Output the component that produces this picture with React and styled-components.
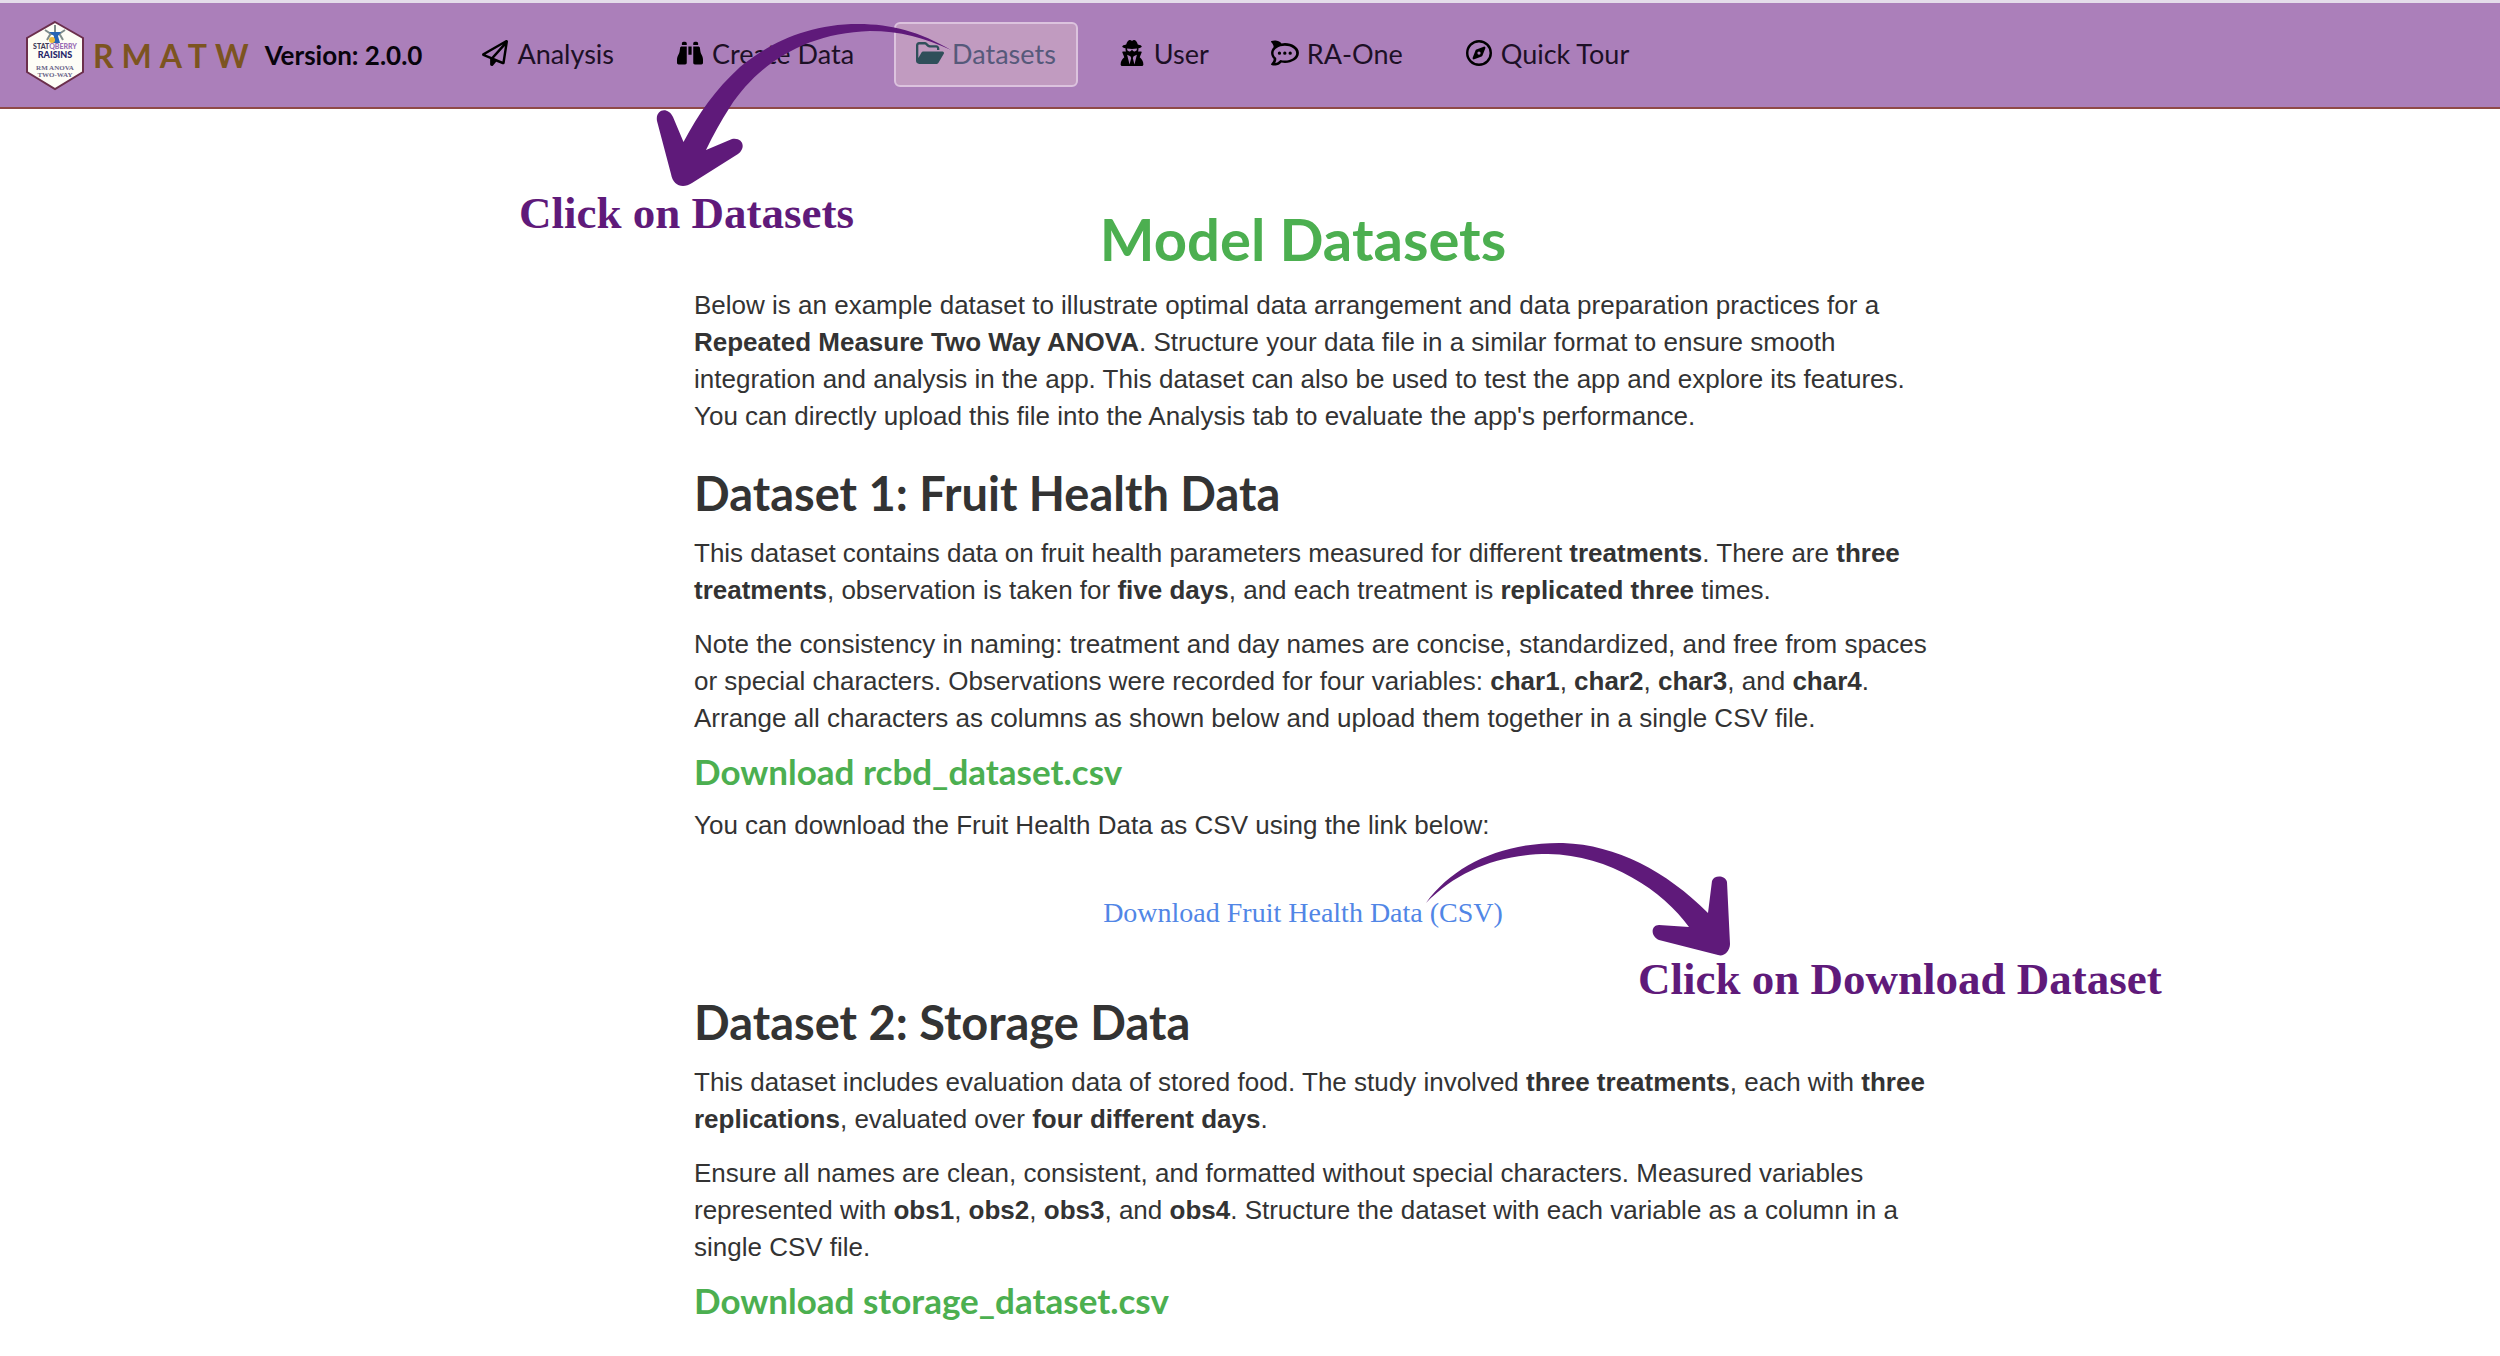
import styled, { createGlobalStyle } from "styled-components";
import {
  FaBinoculars,
  FaRegCompass,
  FaRegPaperPlane,
  FaRocketchat,
  FaUserSecret,
} from "react-icons/fa6";

const GlobalStyle = createGlobalStyle`
  * {
    box-sizing: border-box;
  }

  body {
    margin: 0;
    background-color: #ffffff;
    color: #333333;
    font-family: "Liberation Sans", Arial, sans-serif;
    font-size: 26px;
    line-height: 37px;
  }
`;

const StyledPage = styled.div`
  position: relative;
`;

// Top bar of the app
const StyledNavbar = styled.header`
  display: flex;
  align-items: center;
  height: 109px;
  padding: 0 25px;
  background-color: #ab7fba;
  border-top: 3px solid #e4dcea;
  border-bottom: 2px solid #8f4a48;
  font-family: Lato, sans-serif;
`;

const StyledBrand = styled.div`
  display: flex;
  align-items: center;
`;

const StyledLogo = styled.svg`
  width: 60px;
  height: 72px;
`;

const StyledBrandName = styled.span`
  margin-left: 8px;
  color: #7c5420;
  font-size: 32px;
  font-weight: 700;
  letter-spacing: 8px;
`;

const StyledVersion = styled.span`
  margin-left: 8px;
  color: #08040c;
  font-size: 26px;
  font-weight: 700;
`;

const StyledNav = styled.nav`
  display: flex;
  align-items: center;
  gap: 18px;
  margin-left: 37px;
  padding-bottom: 2px;
`;

// Link of the top bar, the active one gets a box around it
const StyledNavLink = styled.a`
  display: flex;
  align-items: center;
  gap: 8px;
  height: 65px;
  padding: 0 20px 2px;
  border: 2px solid ${({ $active }) => ($active ? "#dcc3de" : "transparent")};
  border-radius: 6px;
  background-color: ${({ $active }) => ($active ? "#c19bc0" : "transparent")};
  color: ${({ $active }) => ($active ? "#56597a" : "#1d1026")};
  font-size: 27px;
  text-decoration: none;
  white-space: nowrap;

  svg {
    width: 28px;
    height: 26px;
    color: ${({ $active }) => ($active ? "#2f4f5a" : "#000000")};
  }
`;

// Column with the texts of the page
const StyledMain = styled.main`
  max-width: 1324px;
  margin: 0 auto;
  padding: 98px 0 40px 106px;
`;

const StyledTitle = styled.h1`
  margin: 0 0 16px;
  color: #4caf50;
  font-family: Lato, sans-serif;
  font-size: 58px;
  line-height: 64px;
  text-align: center;
`;

const StyledHeading = styled.h2`
  margin: 30px 0 14px;
  font-family: Lato, sans-serif;
  font-size: 47px;
  line-height: 56px;
`;

const StyledFileName = styled.h3`
  margin: 0 0 19px;
  color: #4caf50;
  font-family: Lato, sans-serif;
  font-size: 35px;
  line-height: 34px;
`;

// The paragraphs run a little wider than the titles
const StyledText = styled.p`
  margin: 0 -20px 17px 0;
`;

const StyledDownload = styled.div`
  position: relative;
  margin: 50px 0 62px;
  text-align: center;
`;

const StyledDownloadLink = styled.a`
  color: #5186e6;
  font-family: "Liberation Serif", serif;
  font-size: 28px;
  text-decoration: none;
`;

// Notes and arrows that lie over the page
const StyledNote = styled.p`
  position: absolute;
  top: ${({ $top }) => $top}px;
  left: ${({ $left }) => $left}px;
  margin: 0;
  color: #5f1a7a;
  font-family: "Liberation Serif", serif;
  font-size: 45px;
  font-weight: 700;
  line-height: 50px;
  white-space: nowrap;
`;

const StyledArrow = styled.svg`
  position: absolute;
  top: ${({ $top }) => $top}px;
  left: ${({ $left }) => $left}px;
  fill: #5f1a7a;
  pointer-events: none;
`;

const FolderIcon = () => (
  <svg viewBox="0 0 576 512" fill="currentColor">
    <path d="M384 480l48 0c11.4 0 21.9-6 27.6-15.9l112-192c5.8-9.9 5.8-22.1 .1-32.1S555.5 224 544 224l-400 0c-11.4 0-21.9 6-27.6 15.9L48 357.1 48 96c0-8.8 7.2-16 16-16l117.5 0c4.2 0 8.3 1.7 11.3 4.7l26.5 26.5c21 21 49.5 32.8 79.2 32.8L416 144c8.8 0 16 7.2 16 16l0 32 48 0 0-32c0-35.3-28.7-64-64-64L298.5 96c-17 0-33.3-6.7-45.3-18.7L226.7 50.7c-12-12-28.3-18.7-45.3-18.7L64 32C28.7 32 0 60.7 0 96L0 416c0 35.3 28.7 64 64 64l23.7 0L384 480z" />
  </svg>
);

const links = [
  { label: "Analysis", icon: FaRegPaperPlane },
  { label: "Create Data", icon: FaBinoculars },
  { label: "Datasets", icon: FolderIcon, active: true },
  { label: "User", icon: FaUserSecret },
  { label: "RA-One", icon: FaRocketchat },
  { label: "Quick Tour", icon: FaRegCompass },
];

const Logo = () => (
  <StyledLogo viewBox="0 0 60 72" fontFamily="Lato" fontWeight="900" textAnchor="middle">
    <path d="M30 3 58 19V53L30 70 2 53V19Z" fill="#fdfdf6" stroke="#6b2f4c" strokeWidth="2" />
    <path d="M20 11l6 4h8l6-4M26 14l-4 7M34 14l4 7M30 6v8" fill="none" stroke="#7f8c8a" strokeWidth="2" />
    <path d="M24 13h12l-3 4 2 7h-7l1-7Z" fill="#2563b5" />
    <circle cx="27" cy="21" r="3" fill="#edbb3e" />
    <text x="30" y="30" fontSize="7">
      <tspan fill="#403a58">STAT</tspan>
      <tspan fill="#9b6db5">QBERRY</tspan>
    </text>
    <text x="30" y="39" fontSize="9" fill="#26266b">RAISINS</text>
    <g fontFamily="Liberation Serif" fontSize="7" fill="#686488">
      <text x="30" y="51">RM ANOVA</text>
      <text x="30" y="58">TWO-WAY</text>
    </g>
  </StyledLogo>
);

const App = () => {
  return (
    <StyledPage>
      <GlobalStyle />
      <StyledNavbar>
        <StyledBrand>
          <Logo />
          <StyledBrandName>RMATW</StyledBrandName>
          <StyledVersion>Version: 2.0.0</StyledVersion>
        </StyledBrand>
        <StyledNav>
          {links.map(({ label, icon: Icon, active }) => (
            <StyledNavLink key={label} href="#" $active={active}>
              <Icon />
              {label}
            </StyledNavLink>
          ))}
        </StyledNav>
      </StyledNavbar>
      <StyledMain>
        <StyledTitle>Model Datasets</StyledTitle>
        <StyledText>
          Below is an example dataset to illustrate optimal data arrangement and
          data preparation practices for a <b>Repeated Measure Two Way ANOVA</b>
          . Structure your data file in a similar format to ensure smooth
          integration and analysis in the app. This dataset can also be used to
          test the app and explore its features. You can directly upload this
          file into the Analysis tab to evaluate the app's performance.
        </StyledText>

        <StyledHeading>Dataset 1: Fruit Health Data</StyledHeading>
        <StyledText>
          This dataset contains data on fruit health parameters measured for
          different <b>treatments</b>. There are <b>three treatments</b>,
          observation is taken for <b>five days</b>, and each treatment is{" "}
          <b>replicated three</b> times.
        </StyledText>
        <StyledText>
          Note the consistency in naming: treatment and day names are concise,
          standardized, and free from spaces or special characters. Observations
          were recorded for four variables: <b>char1</b>, <b>char2</b>,{" "}
          <b>char3</b>, and <b>char4</b>. Arrange all characters as columns as
          shown below and upload them together in a single CSV file.
        </StyledText>
        <StyledFileName>Download rcbd_dataset.csv</StyledFileName>
        <StyledText>
          You can download the Fruit Health Data as CSV using the link below:
        </StyledText>
        <StyledDownload>
          <StyledDownloadLink href="#">
            Download Fruit Health Data (CSV)
          </StyledDownloadLink>
          <StyledArrow
            $top={-53}
            $left={732}
            width="306"
            height="116"
            viewBox="1427 842 306 116"
            aria-hidden="true"
          >
            <path d="M1427 904C1455 865 1505 843 1564 844C1618 846 1667 872 1709 914L1713 882C1715 876 1726 876 1728 883L1731 945C1731 952 1725 958 1719 956L1660 941C1651 937 1652 926 1660 926L1690 928C1664 892 1611 856 1549 855C1500 855 1458 872 1427 904Z" />
          </StyledArrow>
          <StyledNote $top={60} $left={944}>
            Click on Download Dataset
          </StyledNote>
        </StyledDownload>

        <StyledHeading>Dataset 2: Storage Data</StyledHeading>
        <StyledText>
          This dataset includes evaluation data of stored food. The study
          involved <b>three treatments</b>, each with <b>three replications</b>,
          evaluated over <b>four different days</b>.
        </StyledText>
        <StyledText>
          Ensure all names are clean, consistent, and formatted without special
          characters. Measured variables represented with <b>obs1</b>,{" "}
          <b>obs2</b>, <b>obs3</b>, and <b>obs4</b>. Structure the dataset with
          each variable as a column in a single CSV file.
        </StyledText>
        <StyledFileName>Download storage_dataset.csv</StyledFileName>
      </StyledMain>
      <StyledArrow
        $top={22}
        $left={656}
        width="296"
        height="166"
        viewBox="656 22 296 166"
        aria-hidden="true"
      >
        <path d="M951 50C920 32 892 24 858 24C810 24 770 42 740 67C715 90 699 113 683.5 142L673 117C668 106 655 109 657 121L671 174C673 186 683 189 692 183L738 154C747 147 742 137 732 139L706 150C713 135 721 121 730 107C758 64 805 33 870 31C900 31 925 38 951 50Z" />
      </StyledArrow>
      <StyledNote $top={188} $left={519}>
        Click on Datasets
      </StyledNote>
    </StyledPage>
  );
};

export default App;
